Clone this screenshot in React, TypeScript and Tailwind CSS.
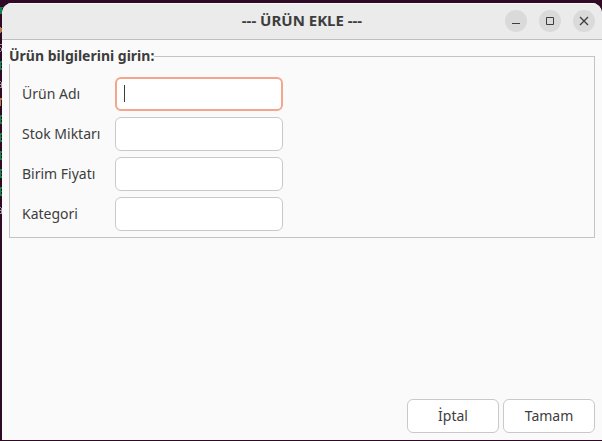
import React from "react";

const fields = [
  { id: "name", label: "Ürün Adı" },
  { id: "stock", label: "Stok Miktarı" },
  { id: "price", label: "Birim Fiyatı" },
  { id: "category", label: "Kategori" },
];

// Edge of the terminal that shows behind the dialog
function TerminalEdge() {
  return (
    <svg aria-hidden="true" className="absolute left-0 top-0" width="6" height="440" shapeRendering="crispEdges">
      <g fill="#14804e">
        <path d="M0 7H4V8H2V14H0Z" />
        {[61, 115, 133, 151, 169, 187].map((y) => (
          <g key={y}>
            <rect x="0" y={y} width="1" height="9" />
            <rect x="1" y={y} width="1" height="2" />
            <rect x="1" y={y + 4} width="1" height="1" />
            <rect x="1" y={y + 7} width="1" height="2" />
          </g>
        ))}
      </g>
      <path fill="#b97a4b" d="M0 27H1V28H2V32H1V33H0ZM0 98H2V100H1V106H0Z" />
      <path fill="#a0949c" d="M0 44H2V45H0ZM0 47H1V48H2V51H1V52H0V51H1V48H0ZM0 81H1V82H2V88H0V87H1V85H0V84H1V82H0ZM0 207H1V208H2V214H0V213H1V211H0V210H1V208H0Z" />
    </svg>
  );
}

const control =
  "flex h-[22px] w-[22px] items-center justify-center rounded-full bg-[#dadada] text-[#3d3d3d]";
const action =
  "h-[34px] w-[92px] rounded-md border border-[#c9c9c9] bg-white text-center text-sm text-[#3d3d3d]";

export default function App() {
  return (
    <div className="relative flex min-h-screen flex-col bg-[#300a24] pb-px pl-0.5 pt-[3px] font-['Noto_Sans','Open_Sans',sans-serif] text-sm text-[#3d3d3d]">
      <TerminalEdge />
      <main className="relative flex grow flex-col overflow-hidden rounded-t-[10px] bg-[#fafafa]">
        <header className="grid h-[37px] grid-cols-[1fr_auto_1fr] items-center border-b border-[#bfbfbf] bg-[#ebebeb] shadow-[inset_0_1px_0_#f7f7f7]">
          <span />
          <h1 className="text-[15px] font-bold">--- ÜRÜN EKLE ---</h1>
          <div className="flex justify-end gap-3 pr-[7px]">
            <button type="button" aria-label="Simge durumuna küçült" className={control}>
              <svg width="10" height="10" stroke="currentColor" fill="none">
                <path d="M1 7.500H9" />
              </svg>
            </button>
            <button type="button" aria-label="Ekranı kapla" className={control}>
              <svg width="10" height="10" stroke="currentColor" fill="none">
                <path d="M1.500 1.500H8.500V8.500H1.500Z" />
              </svg>
            </button>
            <button type="button" aria-label="Kapat" className={control}>
              <svg width="10" height="10" stroke="currentColor" strokeWidth="1.3" fill="none">
                <path d="M1 1L9 9M9 1L1 9" />
              </svg>
            </button>
          </div>
        </header>

        <form className="flex grow flex-col justify-between px-[7px] pb-[7px] pt-2" onSubmit={(e) => e.preventDefault()}>
          <fieldset className="border border-[#c4c4c4] pb-1.5">
            <legend className="-ml-px bg-[#fafafa] text-sm font-bold leading-4">Ürün bilgilerini girin:</legend>
            <div className="grid grid-cols-[83px_168px] items-center gap-x-2.5 gap-y-1.5 px-3 pt-[13px]">
              {fields.map((field, i) => (
                <React.Fragment key={field.id}>
                  <label htmlFor={field.id} className="whitespace-nowrap">
                    {field.label}
                  </label>
                  <div className="relative">
                    <input
                      id={field.id}
                      type="text"
                      className={
                        i === 0
                          ? "block h-[34px] w-full rounded-md border-2 border-[#f4a58c] bg-white px-2 caret-transparent outline-none"
                          : "block h-[34px] w-full rounded-md border border-[#c9c9c9] bg-white px-2 outline-none"
                      }
                    />
                    {i === 0 && <span aria-hidden="true" className="absolute left-[9px] top-2 h-[17px] w-px bg-[#3d3d3d]" />}
                  </div>
                </React.Fragment>
              ))}
            </div>
          </fieldset>

          <footer className="flex justify-end gap-1">
            <button type="button" className={action}>İptal</button>
            <button type="submit" className={action}>Tamam</button>
          </footer>
        </form>
      </main>
    </div>
  );
}
